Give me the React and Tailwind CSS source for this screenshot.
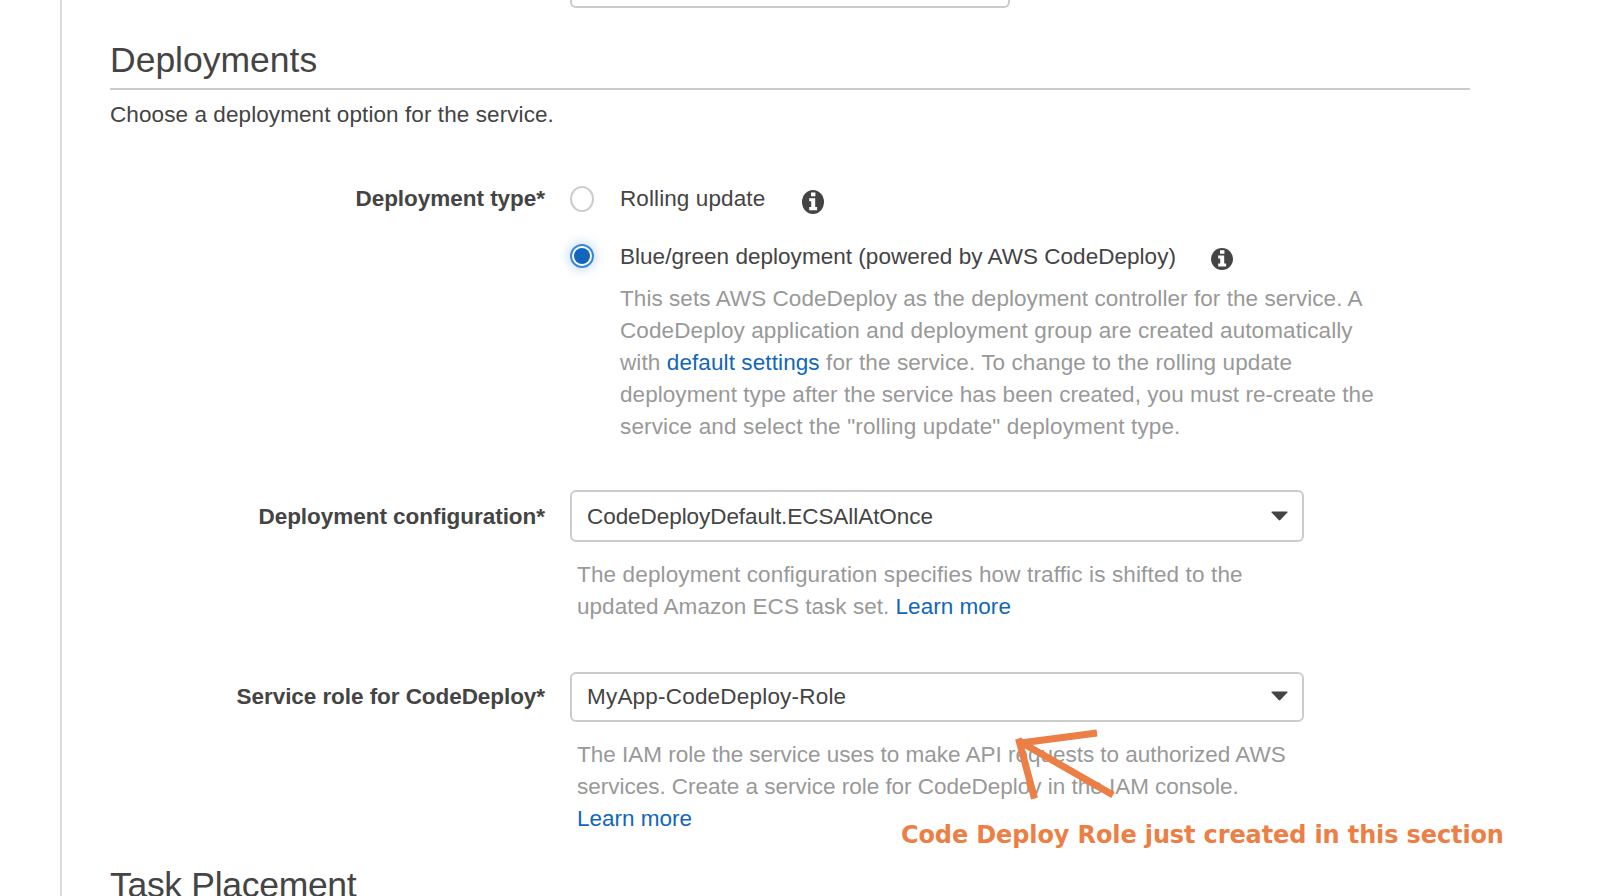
function InfoIcon({ className }) {
  return (
    <svg className={`shrink-0 ${className}`} viewBox="0 0 22 22" preserveAspectRatio="none">
      <circle cx="11" cy="11" r="11" fill="#444" />
      <path d="M9 2.200h4.400v3.500H9zM7.200 7.600h6v8h1.900v3H7.200v-3H9.200v-5.200h-2z" fill="#fff" />
    </svg>
  );
}

function Caret({ className }) {
  return (
    <svg className={`h-[10px] w-[17px] shrink-0 ${className}`} viewBox="0 0 17 10">
      <path d="M1 .5h15q1 .3.4 1L9.3 9q-.8.8-1.6 0L.6 1.500Q0 .8 1 .5z" fill="#444" />
    </svg>
  );
}

function Field({ label, labelClass, children }) {
  return (
    <div className="flex gap-[25px]">
      <div className={`w-[435px] shrink-0 text-right font-bold ${labelClass}`}>{label}</div>
      <div className="min-w-0 flex-1">{children}</div>
    </div>
  );
}

function Select({ className, caretClass = "", children }) {
  return (
    <div
      className={`flex w-[734px] items-center justify-between rounded-[6px] border-2 border-[#ccc] bg-white pr-3.5 pl-[15px] ${className}`}
    >
      {children}
      <Caret className={caretClass} />
    </div>
  );
}

function Link({ children }) {
  return <a className="text-[#1166bb]">{children}</a>;
}

export default function App() {
  return (
    <div className="relative h-[896px] w-[1598px] overflow-hidden bg-white font-['Liberation_Sans',Arial,sans-serif] text-[22.5px] leading-8 whitespace-nowrap text-[#444]">
      <main className="ml-[60px] h-full border-l-2 border-[#ddd] pl-12">
        <div className="ml-[460px] h-2 w-[440px] rounded-b-[6px] border-2 border-t-0 border-[#ccc]" />
        <section className="w-[1360px]">
          <h1 className="flex h-[82px] items-end border-b-2 border-[#ccc] pb-1.5 text-[35.5px] leading-[44px]">
            Deployments
          </h1>
          <p className="mt-[9px] tracking-[0.085px]">Choose a deployment option for the service.</p>

          <div className="mt-[51px]">
            <Field label="Deployment type*" labelClass="pt-px tracking-[-0.03px]">
              <div className="flex h-8">
                <span className="mt-1 h-[26px] w-6 rounded-[50%] border-2 border-[#ccc]" />
                <span className="mt-px ml-[26px] tracking-[0.1px]">Rolling update</span>
                <InfoIcon className="mt-2 ml-[37px] h-6 w-[22px]" />
              </div>
              <div className="mt-[26px] flex h-8">
                <span className="mt-1 flex size-6 items-center justify-center rounded-full border-2 border-[#3388dd] shadow-[0_0_10px_3px_rgba(60,130,240,0.22)]">
                  <span className="size-4 rounded-full bg-[#1166bb]" />
                </span>
                <span className="mt-px ml-[26px] tracking-[0.03px]">
                  Blue/green deployment (powered by AWS CodeDeploy)
                </span>
                <InfoIcon className="mt-[7.5px] ml-[35px] size-[22px]" />
              </div>
              <div className="mt-[11px] ml-[50px] text-[#999]">
                <p className="tracking-[0.06px]">
                  This sets AWS CodeDeploy as the deployment controller for the service. A
                </p>
                <p className="tracking-[0.105px]">
                  CodeDeploy application and deployment group are created automatically
                </p>
                <p className="tracking-[0.1px]">
                  with <Link>default settings</Link> for the service. To change to the rolling update
                </p>
                <p className="tracking-[0.062px]">
                  deployment type after the service has been created, you must re-create the
                </p>
                <p className="tracking-[0.142px]">
                  service and select the "rolling update" deployment type.
                </p>
              </div>
            </Field>
          </div>

          <div className="mt-[47px]">
            <Field label="Deployment configuration*" labelClass="pt-[11px] tracking-[-0.04px]">
              <Select className="h-[52px]">
                <span className="pt-0.5 tracking-[-0.06px]">CodeDeployDefault.ECSAllAtOnce</span>
              </Select>
              <div className="mt-[17px] ml-[7px] text-[#999]">
                <p className="tracking-[0.14px]">
                  The deployment configuration specifies how traffic is shifted to the
                </p>
                <p className="tracking-[0.03px]">
                  updated Amazon ECS task set. <Link>Learn more</Link>
                </p>
              </div>
            </Field>
          </div>

          <div className="mt-[49px]">
            <Field label="Service role for CodeDeploy*" labelClass="pt-[9px] tracking-[-0.06px]">
              <Select className="h-[50px]" caretClass="-mt-0.5">
                <span className="tracking-[0.2px]">MyApp-CodeDeploy-Role</span>
              </Select>
              <div className="mt-[17px] ml-[7px] text-[#999]">
                <p className="tracking-[-0.012px]">
                  The IAM role the service uses to make API requests to authorized AWS
                </p>
                <p className="tracking-[-0.015px]">
                  services. Create a service role for CodeDeploy in the IAM console.
                </p>
                <p>
                  <Link>Learn more</Link>
                </p>
              </div>
            </Field>
          </div>
        </section>
        <h1 className="mt-[28px] text-[35.5px] leading-[44px] tracking-[-0.3px]">Task Placement</h1>
      </main>

      <svg
        className="absolute top-[724px] left-[1010px] h-[80px] w-[110px]"
        viewBox="1010 724 110 80"
        fill="none"
        stroke="#ec7f45"
        strokeWidth="7"
      >
        <path d="M1097 733 1020.500 743M1018.500 738.500 1034.500 798.500M1018 740.500 1113 795" />
      </svg>
      <p className="absolute top-[819px] left-[901px] font-['DejaVu_Sans',Verdana,sans-serif] text-[24px] font-bold tracking-[-0.12px] text-[#ec7f45]">
        Code Deploy Role just created in this section
      </p>
    </div>
  );
}
